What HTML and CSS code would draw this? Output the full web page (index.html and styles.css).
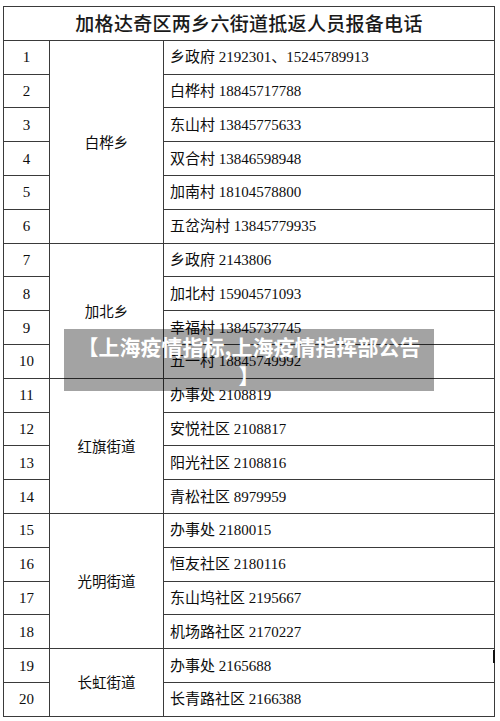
FILE: index.html
```html
<!DOCTYPE html>
<html lang="zh">
<head>
<meta charset="utf-8">
<link rel="stylesheet" href="styles.css">
</head>
<body>
<div class="page">
<table class="sheet">
<colgroup><col class="c-no"><col class="c-grp"><col class="c-info"></colgroup>
<tr class="title-row"><th colspan="3" class="title">加格达奇区两乡六街道抵返人员报备电话</th></tr>
<tr><td class="no">1</td><td class="grp" rowspan="6">白桦乡</td><td class="info">乡政府 2192301、15245789913</td></tr>
<tr><td class="no">2</td><td class="info">白桦村 18845717788</td></tr>
<tr><td class="no">3</td><td class="info">东山村 13845775633</td></tr>
<tr><td class="no">4</td><td class="info">双合村 13846598948</td></tr>
<tr><td class="no">5</td><td class="info">加南村 18104578800</td></tr>
<tr><td class="no">6</td><td class="info">五岔沟村 13845779935</td></tr>
<tr><td class="no">7</td><td class="grp" rowspan="4">加北乡</td><td class="info">乡政府 2143806</td></tr>
<tr><td class="no">8</td><td class="info">加北村 15904571093</td></tr>
<tr><td class="no">9</td><td class="info">幸福村 13845737745</td></tr>
<tr><td class="no">10</td><td class="info">五一村 18845749992</td></tr>
<tr><td class="no">11</td><td class="grp" rowspan="4">红旗街道</td><td class="info">办事处 2108819</td></tr>
<tr><td class="no">12</td><td class="info">安悦社区 2108817</td></tr>
<tr><td class="no">13</td><td class="info">阳光社区 2108816</td></tr>
<tr><td class="no">14</td><td class="info">青松社区 8979959</td></tr>
<tr><td class="no">15</td><td class="grp" rowspan="4">光明街道</td><td class="info">办事处 2180015</td></tr>
<tr><td class="no">16</td><td class="info">恒友社区 2180116</td></tr>
<tr><td class="no">17</td><td class="info">东山坞社区 2195667</td></tr>
<tr><td class="no">18</td><td class="info">机场路社区 2170227</td></tr>
<tr><td class="no">19</td><td class="grp" rowspan="2">长虹街道</td><td class="info">办事处 2165688</td></tr>
<tr><td class="no">20</td><td class="info">长青路社区 2166388</td></tr>
</table>
<div class="caption">【上海疫情指标,上海疫情指挥部公告<br>】</div>
<span class="mark"></span>
</div>
</body>
</html>
```

FILE: styles.css
```css
html, body {
  margin: 0;
  padding: 0;
  background: #ffffff;
}
.page {
  position: relative;
  width: 500px;
  height: 721px;
  overflow: hidden;
  padding: 6px 0 0 3px;
  box-sizing: border-box;
}
.sheet {
  border-collapse: collapse;
  table-layout: fixed;
  width: 491px;
  font-family: "Liberation Serif", "Noto Sans CJK SC", serif;
  color: #0d0d0d;
  font-size: 15px;
}
.c-no { width: 46px; }
.c-grp { width: 114px; }
.c-info { width: 331px; }
.sheet th, .sheet td {
  border: 1px solid #3a3a3a;
  padding: 0;
  line-height: 18px;
}
.title-row { height: 34px; }
.title {
  font-family: "Noto Sans CJK SC", sans-serif;
  font-weight: 500;
  font-size: 19px;
  letter-spacing: 0.3px;
  text-align: center;
  color: #1a1a1a;
}
.sheet tr { height: 33.8px; }
.no {
  text-align: center;
}
.grp {
  text-align: center;
  font-family: "Noto Sans CJK SC", sans-serif;
  font-size: 14.5px;
}
.info {
  padding-left: 6px !important;
  text-align: left;
  white-space: nowrap;
}
.caption {
  position: absolute;
  left: 64px;
  top: 329px;
  width: 370px;
  height: 62px;
  box-sizing: border-box;
  padding-top: 3px;
  background: rgba(0, 0, 0, 0.36);
  color: #ffffff;
  font-family: "Noto Sans CJK SC", sans-serif;
  font-weight: 700;
  font-size: 21px;
  line-height: 29px;
  text-align: center;
  white-space: nowrap;
}
.mark {
  position: absolute;
  left: 493px;
  top: 650px;
  width: 2px;
  height: 13px;
  background: #111;
}
```
